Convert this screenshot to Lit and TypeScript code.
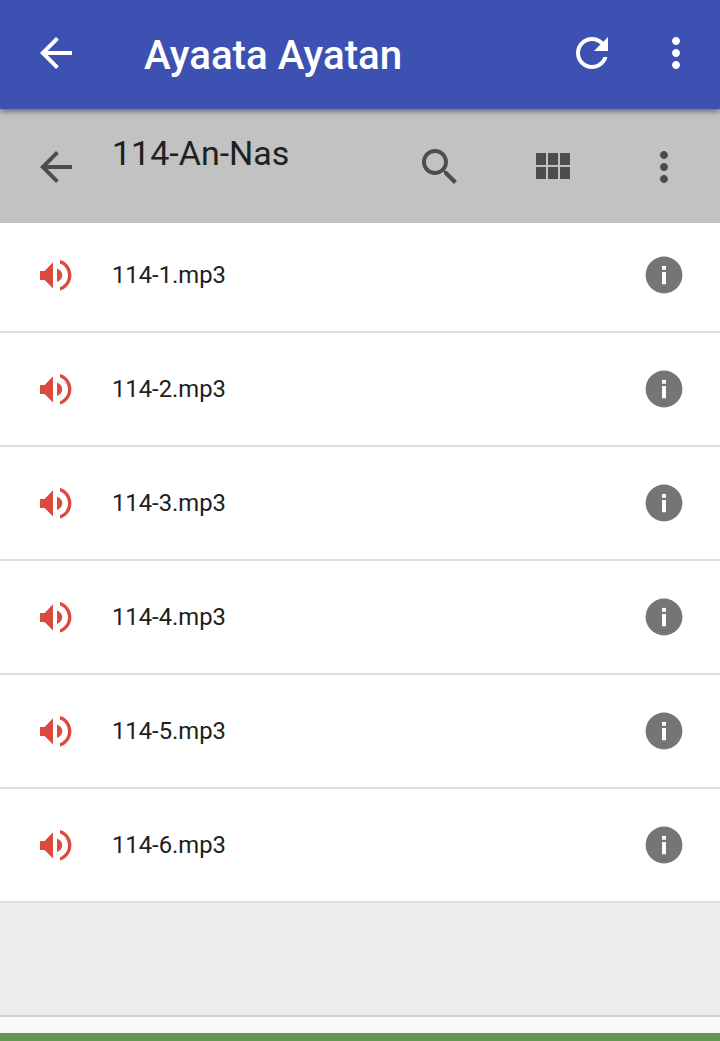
import { LitElement, html, css, svg } from "lit";
import { customElement } from "lit/decorators.js";

const icon = (d: string) => html`<svg class="icon" viewBox="0 0 24 24">${svg`<path d=${d} />`}</svg>`;

const BACK = "M20 11H7.83l5.59-5.59L12 4l-8 8 8 8 1.41-1.41L7.83 13H20v-2z";
const REFRESH =
  "M17.65 6.35C16.2 4.9 14.21 4 12 4c-4.42 0-7.99 3.58-7.99 8s3.57 8 7.99 8c3.73 0 6.84-2.55 7.73-6h-2.08c-.82 2.33-3.04 4-5.65 4-3.31 0-6-2.69-6-6s2.69-6 6-6c1.66 0 3.14.69 4.22 1.78L13 11h7V4l-2.35 2.35z";
const MORE =
  "M12 8c1.1 0 2-.9 2-2s-.9-2-2-2-2 .9-2 2 .9 2 2 2zm0 2c-1.1 0-2 .9-2 2s.9 2 2 2 2-.9 2-2-.9-2-2-2zm0 6c-1.1 0-2 .9-2 2s.9 2 2 2 2-.9 2-2-.9-2-2-2z";
const SEARCH =
  "M15.5 14h-.79l-.28-.27C15.41 12.59 16 11.11 16 9.5 16 5.91 13.09 3 9.5 3S3 5.91 3 9.5 5.91 16 9.5 16c1.61 0 3.09-.59 4.23-1.57l.27.28v.79l5 4.99L20.49 19l-4.99-5zm-6 0C7.01 14 5 11.99 5 9.5S7.01 5 9.5 5 14 7.01 14 9.5 11.99 14 9.5 14z";
const GRID = "M4 11h5V5H4v6zm0 7h5v-6H4v6zm6 0h5v-6h-5v6zm6 0h5v-6h-5v6zm-6-7h5V5h-5v6zm6-6v6h5V5h-5z";

const TRACKS = ["114-1.mp3", "114-2.mp3", "114-3.mp3", "114-4.mp3", "114-5.mp3", "114-6.mp3"];

@customElement("app-root")
export class AppRoot extends LitElement {
  static styles = css`
    :host {
      display: flex;
      flex-direction: column;
      width: 100%;
      height: 1041px;
      overflow: hidden;
      background: #fafafa;
      color: #202020;
      font-family: Roboto, sans-serif;
    }
    svg {
      display: block;
      flex: none;
      fill: currentColor;
    }
    .icon {
      width: 48px;
      height: 48px;
    }
    .appbar {
      box-sizing: border-box;
      position: relative;
      flex: none;
      display: flex;
      align-items: flex-start;
      height: 109px;
      padding: 29px 20px 0 32px;
      background: #3d51b3;
      color: #fff;
      box-shadow: 0 2px 6px rgba(0, 0, 0, 0.5);
    }
    .title {
      flex: 1;
      margin: 0 0 0 64px;
      padding-top: 3px;
      font-size: 40.3px;
      font-weight: 500;
      line-height: 48px;
      white-space: nowrap;
    }
    .appbar .refresh {
      margin-right: 36px;
    }
    .folderbar {
      box-sizing: border-box;
      flex: none;
      display: flex;
      align-items: flex-start;
      height: 114px;
      padding: 34px 32px 0;
      background: #c2c2c2;
      color: #4d4d4d;
    }
    .folder {
      flex: 1;
      margin: -10px 0 0 32px;
      color: #202020;
      font-size: 34px;
      font-weight: 400;
      line-height: 40px;
      white-space: nowrap;
    }
    .actions {
      display: flex;
      gap: 64px;
    }
    .list {
      flex: none;
      margin: 0;
      padding: 0;
      list-style: none;
      background: #fff;
    }
    .row {
      box-sizing: border-box;
      display: flex;
      align-items: center;
      height: 114px;
      padding: 0 37px 0 38px;
      border-bottom: 2px solid #dedede;
    }
    .row:first-child {
      height: 110px;
      padding-bottom: 4px;
    }
    .speaker {
      width: 36px;
      height: 36px;
      color: #db4a3c;
    }
    .name {
      flex: 1;
      margin-left: 38px;
      font-size: 23.8px;
      line-height: 32px;
    }
    .info {
      width: 38px;
      height: 38px;
      color: #757575;
    }
    .rest {
      flex: none;
      height: 112px;
      background: #ededed;
      border-bottom: 2px solid #cfcfcf;
    }
    .banner {
      height: 8px;
      margin-top: auto;
      background: repeating-linear-gradient(90deg, #629150 0 1px, #659653 1px 8px);
    }
  `;

  render() {
    return html`
      <header class="appbar">
        ${icon(BACK)}
        <h1 class="title">Ayaata Ayatan</h1>
        <div class="refresh">${icon(REFRESH)}</div>
        ${icon(MORE)}
      </header>
      <div class="folderbar">
        ${icon(BACK)}
        <h2 class="folder">114-An-Nas</h2>
        <div class="actions">${icon(SEARCH)} ${icon(GRID)} ${icon(MORE)}</div>
      </div>
      <ul class="list">
        ${TRACKS.map(
          (name) => html`
            <li class="row">
              <svg class="speaker" viewBox="0 0 36 36">
                <path d="M2 14H6.6L15 5.2V31.4L6.6 23H2z" />
                <path d="M19 11.6C22.4 12.8 24.2 15.4 24.2 18.3S22.4 23.8 19 25z" />
                <path
                  d="M22 3C28.6 4.8 33.4 11 33.4 18.3S28.6 31.8 22 33.6V30.2C26.8 28.5 30 23.8 30 18.3S26.8 8.1 22 6.4z"
                />
              </svg>
              <span class="name">${name}</span>
              <svg class="info" viewBox="0 0 38 38">
                <path
                  fill-rule="evenodd"
                  d="M19 .6A18.4 18.4 0 1 1 19 37.4A18.4 18.4 0 1 1 19 .6zM17 10V13.8H21V10zM17 16V28.3H21V16z"
                />
              </svg>
            </li>
          `
        )}
      </ul>
      <div class="rest"></div>
      <div class="banner"></div>
    `;
  }
}
